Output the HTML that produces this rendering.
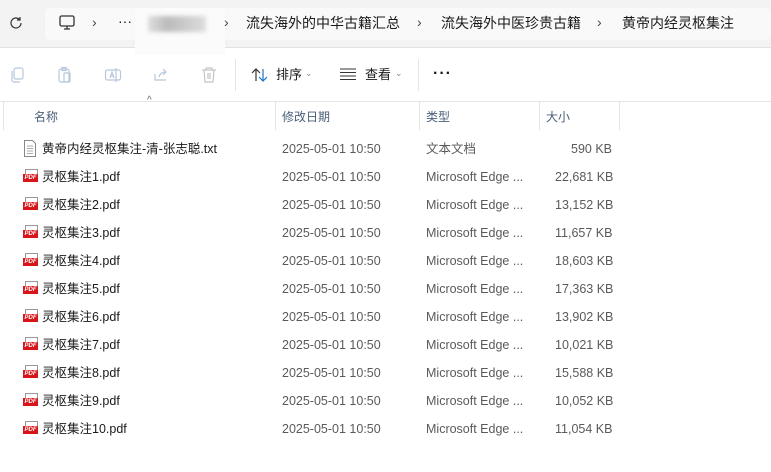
<!DOCTYPE html><html><head><meta charset="utf-8"><style>
body{margin:0;width:771px;height:472px;background:#fff;font-family:"Liberation Sans","Noto Sans CJK SC",sans-serif;position:relative;overflow:hidden;color:#1a1a1a}
.a{position:absolute;white-space:nowrap;line-height:18px}
.top{position:absolute;left:0;top:0;width:771px;height:47px;background:#f3f3f3;border-bottom:1px solid #e2e2e2}
.addr{position:absolute;left:45px;top:8px;width:726px;height:32px;background:#f9f9f9;border-radius:5px}
.crumb{font-size:14px;color:#1a1a1a;top:14px}
.chev{font-size:14px;color:#444;top:13px}
.hd{font-size:12px;color:#4a6079;top:108px}
.sep{position:absolute;top:102px;width:1px;height:28px;background:#e5e5e5}
.row{position:absolute;left:0;width:771px;height:28px;font-size:12.5px}
.row span{position:absolute;top:5px;white-space:nowrap;line-height:18px;height:18px}
.pdf{position:absolute;left:23px;top:6px;width:15px;height:15px}
.pdf:before{content:"";position:absolute;left:2px;top:0;width:11px;height:6px;border:1px solid #999;border-bottom:none;background:#fff}
.pdf:after{content:"PDF";position:absolute;left:0;top:5px;width:15px;height:8px;background:#d7151b;color:#fff;font-size:6px;font-weight:bold;line-height:8px;text-align:center}
.g{color:#5a5a5a}
</style></head><body>
<div class="top"></div><div class="addr"></div>
<svg class="a" style="left:8px;top:15px" width="16" height="16" viewBox="0 0 16 16"><path d="M13 8a5 5 0 1 1-1.5-3.6M12 2v3h-3" fill="none" stroke="#333" stroke-width="1.2"/></svg>
<svg class="a" style="left:58px;top:14px" width="18" height="18" viewBox="0 0 18 18"><rect x="2" y="2" width="14" height="10" rx="1.5" fill="none" stroke="#333" stroke-width="1.3"/><path d="M6 15h6M9 12v3" stroke="#333" stroke-width="1.3"/></svg>
<span class="a chev" style="left:92px">›</span>
<span class="a" style="left:118px;top:12px;font-size:14px">···</span>
<div class="a" style="left:135px;top:8px;width:90px;height:47px;background:#fbfbfb"></div>
<div class="a" style="left:148px;top:16px;width:58px;height:16px;background:linear-gradient(90deg,#ddd,#bbb,#ccc,#ddd);filter:blur(2px)"></div>
<span class="a chev" style="left:224px">›</span>
<span class="a crumb" style="left:246px">流失海外的中华古籍汇总</span>
<span class="a chev" style="left:417px">›</span>
<span class="a crumb" style="left:441px">流失海外中医珍贵古籍</span>
<span class="a chev" style="left:597px">›</span>
<span class="a crumb" style="left:622px">黄帝内经灵枢集注</span>
<svg class="a" style="left:8px;top:66px" width="18" height="18" viewBox="0 0 18 18" fill="none" stroke="#b8c8dc" stroke-width="1.2"><rect x="6" y="2" width="9" height="11" rx="2"/><path d="M4 5v9a2 2 0 0 0 2 2h6"/></svg>
<svg class="a" style="left:56px;top:66px" width="18" height="18" viewBox="0 0 18 18" fill="none" stroke="#b8c8dc" stroke-width="1.2"><rect x="3" y="3" width="10" height="13" rx="2"/><rect x="6" y="1.5" width="4" height="3"/><rect x="8" y="7" width="6" height="9" rx="1"/></svg>
<svg class="a" style="left:104px;top:66px" width="18" height="18" viewBox="0 0 18 18" fill="none" stroke="#b8c8dc" stroke-width="1.2"><rect x="1.5" y="4" width="15" height="10" rx="2"/><path d="M6 12l2-6 2 6M7 10h2M12 2v14"/></svg>
<svg class="a" style="left:152px;top:66px" width="18" height="18" viewBox="0 0 18 18" fill="none" stroke="#b8c8dc" stroke-width="1.2"><path d="M3 8v6h11M7 11c1-4 4-5 7-5M11 3l3 3-3 3"/></svg>
<svg class="a" style="left:200px;top:66px" width="18" height="18" viewBox="0 0 18 18" fill="none" stroke="#c4c4c4" stroke-width="1.2"><path d="M2 4h14M6 4V2h6v2M4 4l1 12h8l1-12M8 7v6M10 7v6"/></svg>
<div class="a" style="left:235px;top:59px;width:1px;height:32px;background:#e5e5e5"></div>
<svg class="a" style="left:251px;top:67px" width="18" height="16" viewBox="0 0 18 16" fill="none" stroke-width="1.2"><path d="M5 14V2M1 6l4-4 4 4" stroke="#333"/><path d="M12 2v12M8 10l4 4 4-4" stroke="#1a73c9"/></svg>
<span class="a" style="left:276px;top:66px;font-size:13px">排序</span><span class="a" style="left:305px;top:64px;font-size:9px;color:#888">⌄</span>
<svg class="a" style="left:340px;top:68px" width="16" height="12"><path d="M0 1h16M0 4.5h16M0 8h16M0 11.5h16" stroke="#333" stroke-width="1"/></svg>
<span class="a" style="left:365px;top:66px;font-size:13px">查看</span><span class="a" style="left:395px;top:64px;font-size:9px;color:#888">⌄</span>
<div class="a" style="left:418px;top:59px;width:1px;height:32px;background:#e5e5e5"></div>
<span class="a" style="left:433px;top:65px;font-size:16px;font-weight:bold;letter-spacing:1px">···</span>
<div class="a" style="left:0;top:101px;width:771px;height:1px;background:#e5e5e5"></div>
<div class="sep" style="left:3px"></div><div class="sep" style="left:275px"></div><div class="sep" style="left:419px"></div><div class="sep" style="left:539px"></div><div class="sep" style="left:619px"></div>
<span class="a" style="left:147px;top:96px;font-size:10px;color:#666;line-height:10px">^</span>
<span class="a hd" style="left:34px">名称</span><span class="a hd" style="left:282px">修改日期</span><span class="a hd" style="left:426px">类型</span><span class="a hd" style="left:546px">大小</span>
<div class="row" style="top:135px"><svg class="a" style="left:23px;top:5px" width="14" height="17" viewBox="0 0 14 17" fill="none" stroke="#888"><path d="M1.5 .5h8l3 3v13h-11z"/><path d="M4 6h6M4 8.5h6M4 11h6M4 13.5h6" stroke="#aaa"/></svg><span style="left:42px">黄帝内经灵枢集注-清-张志聪.txt</span><span class="g" style="left:282px">2025-05-01 10:50</span><span class="g" style="left:426px">文本文档</span><span class="g" style="left:571px">590 KB</span></div>
<div class="row" style="top:163px"><i class="pdf"></i><span style="left:42px">灵枢集注1.pdf</span><span class="g" style="left:282px">2025-05-01 10:50</span><span class="g" style="left:426px">Microsoft Edge ...</span><span class="g" style="left:555px">22,681 KB</span></div>
<div class="row" style="top:191px"><i class="pdf"></i><span style="left:42px">灵枢集注2.pdf</span><span class="g" style="left:282px">2025-05-01 10:50</span><span class="g" style="left:426px">Microsoft Edge ...</span><span class="g" style="left:555px">13,152 KB</span></div>
<div class="row" style="top:219px"><i class="pdf"></i><span style="left:42px">灵枢集注3.pdf</span><span class="g" style="left:282px">2025-05-01 10:50</span><span class="g" style="left:426px">Microsoft Edge ...</span><span class="g" style="left:555px">11,657 KB</span></div>
<div class="row" style="top:247px"><i class="pdf"></i><span style="left:42px">灵枢集注4.pdf</span><span class="g" style="left:282px">2025-05-01 10:50</span><span class="g" style="left:426px">Microsoft Edge ...</span><span class="g" style="left:555px">18,603 KB</span></div>
<div class="row" style="top:275px"><i class="pdf"></i><span style="left:42px">灵枢集注5.pdf</span><span class="g" style="left:282px">2025-05-01 10:50</span><span class="g" style="left:426px">Microsoft Edge ...</span><span class="g" style="left:555px">17,363 KB</span></div>
<div class="row" style="top:303px"><i class="pdf"></i><span style="left:42px">灵枢集注6.pdf</span><span class="g" style="left:282px">2025-05-01 10:50</span><span class="g" style="left:426px">Microsoft Edge ...</span><span class="g" style="left:555px">13,902 KB</span></div>
<div class="row" style="top:331px"><i class="pdf"></i><span style="left:42px">灵枢集注7.pdf</span><span class="g" style="left:282px">2025-05-01 10:50</span><span class="g" style="left:426px">Microsoft Edge ...</span><span class="g" style="left:555px">10,021 KB</span></div>
<div class="row" style="top:359px"><i class="pdf"></i><span style="left:42px">灵枢集注8.pdf</span><span class="g" style="left:282px">2025-05-01 10:50</span><span class="g" style="left:426px">Microsoft Edge ...</span><span class="g" style="left:555px">15,588 KB</span></div>
<div class="row" style="top:387px"><i class="pdf"></i><span style="left:42px">灵枢集注9.pdf</span><span class="g" style="left:282px">2025-05-01 10:50</span><span class="g" style="left:426px">Microsoft Edge ...</span><span class="g" style="left:555px">10,052 KB</span></div>
<div class="row" style="top:415px"><i class="pdf"></i><span style="left:42px">灵枢集注10.pdf</span><span class="g" style="left:282px">2025-05-01 10:50</span><span class="g" style="left:426px">Microsoft Edge ...</span><span class="g" style="left:555px">11,054 KB</span></div>
</body></html>
